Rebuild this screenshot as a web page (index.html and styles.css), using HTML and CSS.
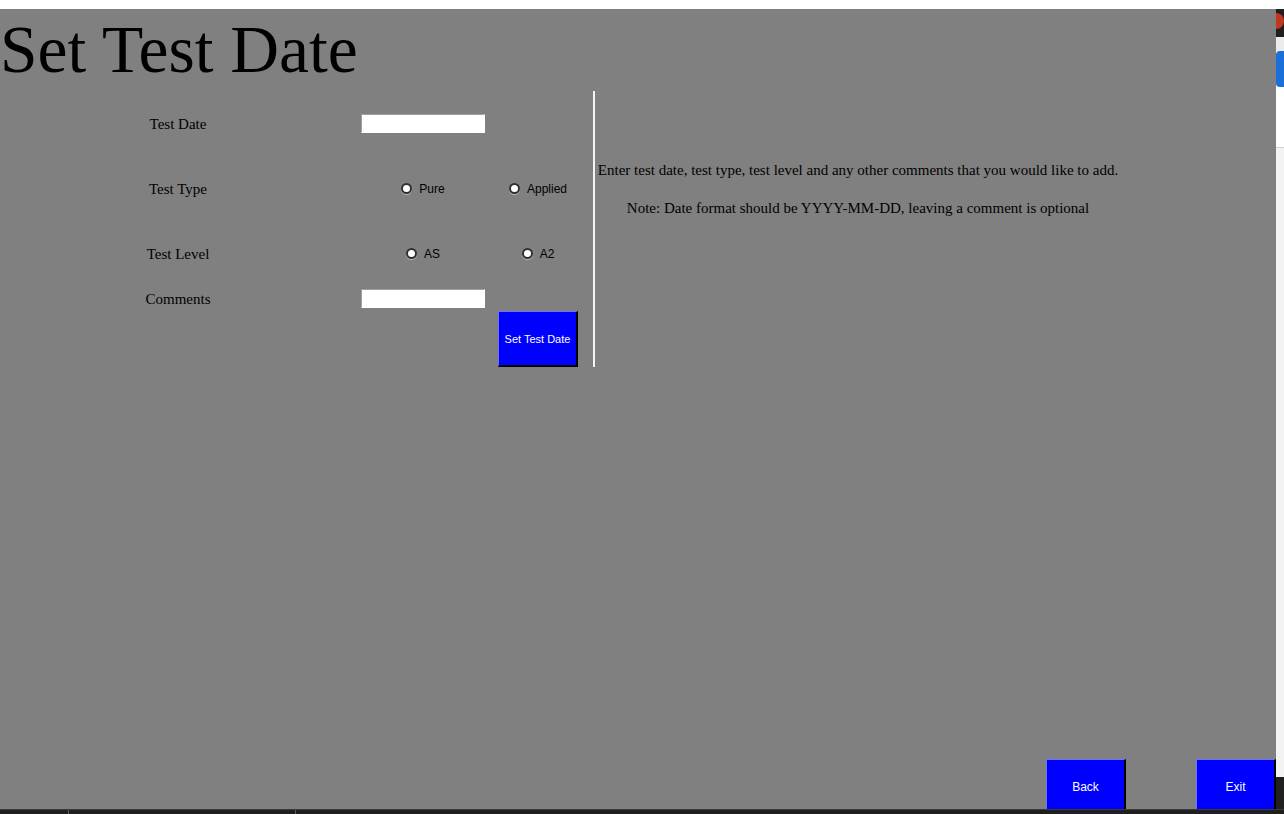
FILE: index.html
```html
<!DOCTYPE html>
<html>
<head>
<meta charset="utf-8">
<link rel="stylesheet" href="styles.css">
</head>
<body>
<div class="topbar"></div>
<div class="middle">
  <div class="window">
    <h1 class="title">Set Test Date</h1>
    <div class="content">
      <div class="form">
        <div class="label">Test Date</div>
        <div class="cell"><input class="entry" type="text"></div>
        <div class="cell"></div>

        <div class="label">Test Type</div>
        <div class="cell"><label class="radio"><span class="dot"></span>Pure</label></div>
        <div class="cell"><label class="radio"><span class="dot"></span>Applied</label></div>

        <div class="label">Test Level</div>
        <div class="cell"><label class="radio"><span class="dot"></span>AS</label></div>
        <div class="cell"><label class="radio"><span class="dot"></span>A2</label></div>

        <div class="label">Comments</div>
        <div class="cell"><input class="entry" type="text"></div>
        <div class="cell"></div>

        <div class="cell"></div>
        <div class="cell"></div>
        <div class="cell"><button class="tkbtn">Set Test Date</button></div>
      </div>
      <div class="divider"></div>
      <div class="info">
        <p class="info-line">Enter test date, test type, test level and any other comments that you would like to add.</p>
        <p class="info-line note">Note: Date format should be YYYY-MM-DD, leaving a comment is optional</p>
      </div>
    </div>
    <div class="footer">
      <button class="tkbtn big">Back</button>
      <button class="tkbtn big">Exit</button>
    </div>
  </div>
  <div class="side">
    <div class="side-dark"><span class="side-red"></span></div>
    <div class="side-gray"></div>
    <div class="side-blue"></div>
    <div class="side-white"></div>
    <div class="side-light"></div>
    <div class="side-dark2"></div>
  </div>
</div>
<div class="taskbar">
  <div class="tb-seg tb-a"></div>
  <div class="tb-seg tb-b"></div>
  <div class="tb-seg tb-c"></div>
</div>
</body>
</html>
```

FILE: styles.css
```css
html, body {
  margin: 0;
  padding: 0;
}
body {
  width: 1284px;
  height: 814px;
  overflow: hidden;
  background: #202020;
  font-family: "Liberation Serif", "Times New Roman", serif;
}
.topbar {
  height: 9px;
  background: #ffffff;
}
.middle {
  display: flex;
  height: 800px;
}
.window {
  width: 1276px;
  height: 800px;
  background: #808080;
  display: flex;
  flex-direction: column;
  overflow: hidden;
}
.title {
  margin: 0;
  padding-left: 0;
  height: 82px;
  line-height: 81px;
  font-size: 67.5px;
  font-weight: normal;
  color: #000;
  white-space: nowrap;
}
.content {
  display: flex;
  align-items: flex-start;
}
.form {
  display: grid;
  grid-template-columns: 356px 134px 96px;
  grid-template-rows: 65px 65px 65px 25px 56px;
}
.label {
  display: flex;
  align-items: center;
  justify-content: center;
  font-size: 15px;
  color: #000;
  padding-top: 1px;
}
.cell {
  display: flex;
  align-items: center;
  justify-content: center;
}
.entry {
  box-sizing: border-box;
  width: 124px;
  height: 19px;
  margin: 0;
  padding: 0 2px;
  background: #fff;
  border-style: solid;
  border-width: 1px;
  border-color: #a0a0a0 #ffffff #ffffff #a0a0a0;
  outline: none;
}
.radio {
  display: flex;
  align-items: center;
  gap: 7px;
  font-family: "Liberation Sans", Arial, sans-serif;
  font-size: 12px;
  color: #000;
}
.dot {
  box-sizing: border-box;
  width: 11px;
  height: 11px;
  border-radius: 50%;
  background: #fff;
  border: 2px solid #303030;
  box-shadow: 0 1px 0 #b8b8b8;
}
.tkbtn {
  box-sizing: border-box;
  width: 80px;
  height: 56px;
  margin: 0;
  padding: 0;
  background: #0000ff;
  color: #fff;
  font-family: "Liberation Sans", Arial, sans-serif;
  font-size: 11px;
  border-style: solid;
  border-width: 1px 2px 2px 1px;
  border-color: #7070ff #000000 #000000 #7070ff;
  cursor: pointer;
}
.divider {
  width: 2px;
  height: 276px;
  margin-left: 7px;
  background: #f4f4f4;
}
.info {
  width: 526px;
  padding-top: 70px;
  text-align: center;
  font-size: 15px;
  color: #000;
}
.info-line {
  margin: 0;
  line-height: 19px;
  white-space: nowrap;
}
.info-line.note {
  margin-top: 19px;
}
.footer {
  margin-top: auto;
  margin-bottom: -6px;
  display: flex;
  justify-content: flex-end;
  gap: 70px;
}
.tkbtn.big {
  font-size: 12px;
}
.side {
  width: 8px;
  height: 800px;
  display: flex;
  flex-direction: column;
  background: #f3f3f3;
}
.side-dark {
  height: 28px;
  background: #1f1f1f;
  position: relative;
  overflow: hidden;
}
.side-red {
  position: absolute;
  left: 0;
  top: 4px;
  width: 16px;
  height: 16px;
  border-radius: 50%;
  background: #c0391e;
  margin-left: -8px;
}
.side-gray {
  height: 14px;
  background: #ececec;
}
.side-blue {
  height: 36px;
  background: #1a6fd8;
  border-radius: 4px 0 0 4px;
}
.side-white {
  height: 60px;
  background: #ffffff;
  border-bottom: 1px solid #d0d0d0;
}
.side-light {
  flex: 1;
  background: #f3f3f3;
}
.side-dark2 {
  height: 32px;
  background: #202020;
}
.taskbar {
  height: 5px;
  background: #1f1f1f;
  display: flex;
  border-top: 1px solid #3a3a3a;
}
.tb-seg {
  height: 5px;
}
.tb-a {
  width: 68px;
  border-right: 1px solid #5a5a5a;
}
.tb-b {
  width: 226px;
  border-right: 1px solid #5a5a5a;
}
.tb-c {
  flex: 1;
}
```
